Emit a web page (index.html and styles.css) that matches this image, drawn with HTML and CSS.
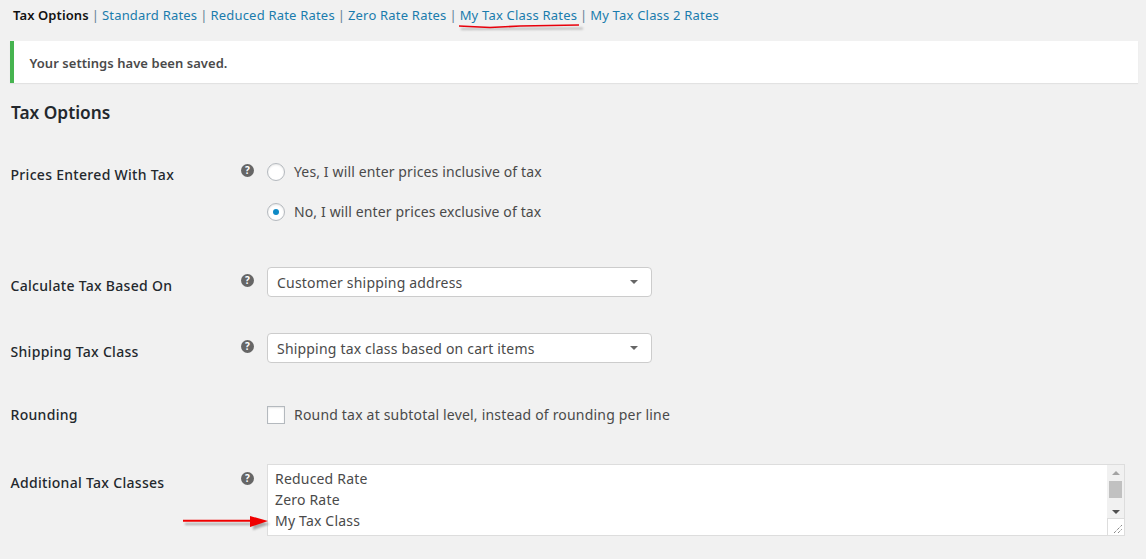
FILE: index.html
```html
<!DOCTYPE html>
<html lang="en">
<head>
<meta charset="utf-8">
<title>Tax Options</title>
<link rel="stylesheet" href="styles.css">
</head>
<body>
<nav class="subnav">
  <span class="current">Tax Options</span><span class="sep">|</span><a href="#">Standard Rates</a><span class="sep">|</span><a href="#">Reduced Rate Rates</a><span class="sep">|</span><a href="#">Zero Rate Rates</a><span class="sep">|</span><a href="#">My Tax Class Rates</a><span class="sep">|</span><a href="#">My Tax Class 2 Rates</a>
</nav>
<div class="notice">Your settings have been saved.</div>
<h2 class="title">Tax Options</h2>
<div class="form">
  <div class="row row-prices">
    <div class="label">Prices Entered With Tax</div>
    <svg class="help" viewBox="0 0 13 13"><circle cx="6.5" cy="6.5" r="6.5" fill="#666"/><text x="6.5" y="10" class="help-mark">?</text></svg>
    <div class="radios">
      <label class="option"><input type="radio" name="prices"><span>Yes, I will enter prices inclusive of tax</span></label>
      <label class="option"><input type="radio" name="prices" checked><span>No, I will enter prices exclusive of tax</span></label>
    </div>
  </div>
  <div class="row row-calc">
    <div class="label">Calculate Tax Based On</div>
    <svg class="help" viewBox="0 0 13 13"><circle cx="6.5" cy="6.5" r="6.5" fill="#666"/><text x="6.5" y="10" class="help-mark">?</text></svg>
    <div class="select"><span>Customer shipping address</span><i class="caret"></i></div>
  </div>
  <div class="row row-ship">
    <div class="label">Shipping Tax Class</div>
    <svg class="help" viewBox="0 0 13 13"><circle cx="6.5" cy="6.5" r="6.5" fill="#666"/><text x="6.5" y="10" class="help-mark">?</text></svg>
    <div class="select"><span>Shipping tax class based on cart items</span><i class="caret"></i></div>
  </div>
  <div class="row row-round">
    <div class="label">Rounding</div>
    <div class="help-gap"></div>
    <label class="option"><input type="checkbox"><span>Round tax at subtotal level, instead of rounding per line</span></label>
  </div>
  <div class="row row-classes">
    <div class="label">Additional Tax Classes</div>
    <svg class="help" viewBox="0 0 13 13"><circle cx="6.5" cy="6.5" r="6.5" fill="#666"/><text x="6.5" y="10" class="help-mark">?</text></svg>
    <div class="textbox">
      <div class="lines">
        <div>Reduced Rate</div>
        <div>Zero Rate</div>
        <div>My Tax Class</div>
      </div>
      <div class="scroll">
        <div class="track">
          <i class="arrow-up"></i>
          <i class="thumb"></i>
          <i class="arrow-down"></i>
        </div>
        <div class="grip">
          <svg viewBox="0 0 17 17" width="17" height="17"><path d="M6 14 14 6M10 14 14 10" stroke="#555" stroke-width="1" stroke-dasharray="1 1" fill="none"/></svg>
        </div>
      </div>
    </div>
  </div>
</div>
<svg class="marks" width="1146" height="559" viewBox="0 0 1146 559">
  <defs><filter id="soft" x="-20%" y="-200%" width="140%" height="500%"><feGaussianBlur stdDeviation="1.2"/></filter></defs>
  <g filter="url(#soft)" opacity=".45" fill="#555" stroke="#555">
    <path d="M461 29 L583 28.500" stroke-width="1.600" fill="none"/>
    <path d="M185 524H255" stroke-width="2"/>
    <path d="M253 519 270 524 253 530Z" stroke="none"/>
  </g>
  <path d="M459 26 L490 27.500 L520 26 L579 25" stroke="#e8000b" stroke-width="1.600" fill="none"/>
  <path d="M183 520.700H252" stroke="#f00000" stroke-width="2"/>
  <path d="M250 516 268 521 250 527Z" fill="#f00000"/>
</svg>
</body>
</html>
```
FILE: styles.css
```css
* { box-sizing: border-box; }
html, body { margin: 0; height: 559px; overflow: hidden; }
body {
  position: relative;
  padding: 0 8px 0 10px;
  background: #f1f1f1;
  color: #4a4a4a;
  font-family: "Noto Sans", "Open Sans", sans-serif;
  font-size: 14px;
  letter-spacing: .19px;
  line-height: 20px;
}
.subnav {
  display: flex;
  height: 41px;
  padding: 5px 0 0 3px;
  color: #5f7f96;
  font-size: 13px;
  letter-spacing: .2px;
}
.subnav a { color: #1a7cad; text-decoration: none; }
.subnav .current { color: #111; font-weight: 600; letter-spacing: .1px; }
.subnav .sep { margin: 0 2.750px 0 3px; }
.notice {
  height: 42px;
  padding: 12px 16px 12px 15.500px;
  background: #fff;
  border-left: 4px solid #46b450;
  box-shadow: 0 1px 1px rgba(0, 0, 0, .06);
  font-weight: 600;
  font-size: 13px;
  letter-spacing: .05px;
}
.title {
  margin: 18px 0 0 1px;
  height: 23px;
  line-height: 24px;
  color: #23282d;
  font-size: 17.3px;
  font-weight: 600;
  letter-spacing: 0;
}
.row { display: flex; align-items: flex-start; }
.label {
  width: 231px;
  flex: none;
  padding-left: .500px;
  color: #23282d;
  font-weight: 500;
  letter-spacing: .3px;
}
.help { width: 13px; height: 13px; flex: none; margin-right: 13px; }
.help-gap { width: 26px; flex: none; }
.help-mark {
  font: 700 10px "Noto Sans", sans-serif;
  fill: #fff;
  text-anchor: middle;
}
.row-prices { margin-top: 41px; height: 102px; }
.row-prices .help { margin-top: -1px; }
.row-calc { height: 66px; }
.row-calc .label { margin-top: 9px; }
.row-calc .help { margin-top: 7px; }
.row-ship { height: 66px; }
.row-ship .label { margin-top: 9px; }
.row-ship .help { margin-top: 7px; }
.row-round { height: 65px; }
.row-round .label { margin-top: 6px; }
.row-round .option { margin-top: 6px; }
.row-classes .label { margin-top: 9px; }
.row-classes .help { margin-top: 8px; }
.radios { display: flex; flex-direction: column; gap: 20px; margin-top: -3px; letter-spacing: .13px; }
.option { display: flex; align-items: center; gap: 9px; height: 20px; }
.option input {
  appearance: none;
  flex: none;
  margin: 0;
  width: 18px;
  height: 18px;
  background: #fff;
  border: 1px solid #b4b9be;
  box-shadow: inset 0 1px 2px rgba(0, 0, 0, .1);
}
.option input[type="radio"] { border-radius: 50%; position: relative; }
.option input[type="radio"]:checked::after {
  content: "";
  position: absolute;
  left: 5px;
  top: 5px;
  width: 6px;
  height: 6px;
  border-radius: 50%;
  background: #0e8ac6;
}
.select {
  display: flex;
  align-items: center;
  justify-content: space-between;
  width: 385px;
  height: 30px;
  padding: 2px 13px 0 9px;
  background: #fff;
  border: 1px solid #ccc;
  border-radius: 4px;
}
.caret {
  width: 0;
  height: 0;
  margin-top: -2px;
  border-left: 4px solid transparent;
  border-right: 4px solid transparent;
  border-top: 4px solid #666;
}
.textbox {
  display: flex;
  width: 858px;
  height: 72px;
  background: #fff;
  border: 1px solid #ddd;
}
.lines { flex: 1; padding: 3px 7px; line-height: 21px; }
.scroll { width: 17px; flex: none; display: flex; flex-direction: column; }
.track {
  flex: 1;
  display: flex;
  flex-direction: column;
  align-items: center;
  background: #f1f1f1;
  padding-top: 6px;
}
.arrow-up {
  width: 0;
  height: 0;
  border-left: 4px solid transparent;
  border-right: 4px solid transparent;
  border-bottom: 4px solid #a3a3a3;
}
.thumb { width: 13px; height: 17px; margin: 6px 0; background: #c1c1c1; }
.arrow-down {
  width: 0;
  height: 0;
  margin-top: 6px;
  border-left: 4px solid transparent;
  border-right: 4px solid transparent;
  border-top: 4px solid #505050;
}
.grip { height: 17px; background: #fff; border-top: 1px solid #ddd; border-left: 1px solid #ddd; }
.grip svg { display: block; }
.marks { position: absolute; left: 0; top: 0; pointer-events: none; }
```
